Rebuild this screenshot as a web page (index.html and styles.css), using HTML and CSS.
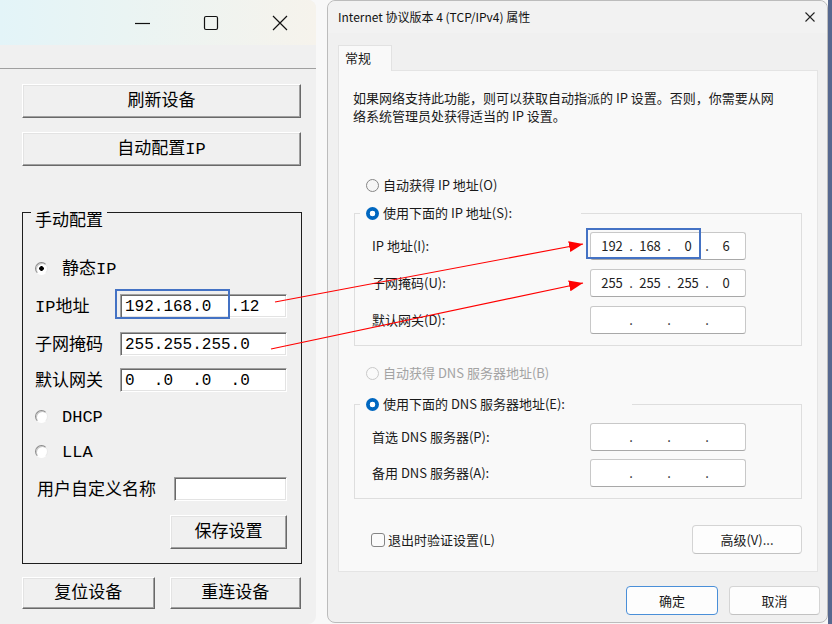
FILE: index.html
```html
<!DOCTYPE html>
<html lang="zh-CN">
<head>
<meta charset="utf-8">
<title>IP 配置</title>
<link rel="stylesheet" href="styles.css">
</head>
<body>
<div class="win-left">
  <div class="lt-title">
    <span class="cap"><svg width="16" height="16" viewBox="0 0 16 16"><path d="M1 8.5h15" stroke="#111" stroke-width="1.2"/></svg></span>
    <span class="cap"><svg width="16" height="16" viewBox="0 0 16 16"><rect x="1.5" y="1.5" width="13" height="13" rx="1.5" fill="none" stroke="#111" stroke-width="1.2"/></svg></span>
    <span class="cap"><svg width="16" height="16" viewBox="0 0 16 16"><path d="M1 1L15 15M15 1L1 15" stroke="#111" stroke-width="1.2"/></svg></span>
  </div>
  <div class="lt-menu"></div>
  <div class="lt-body">
    <button class="cbtn wide">刷新设备</button>
    <button class="cbtn wide second">自动配置IP</button>
    <div class="group">
      <span class="group-title">手动配置</span>
      <div class="lrow radio-first"><span class="cradio checked"></span><span class="rlabel">静态IP</span></div>
      <div class="lrow field gap14"><span class="flabel">IP地址</span><span class="cinput">192.168.0  .12</span></div>
      <div class="lrow field gap14"><span class="flabel">子网掩码</span><span class="cinput">255.255.255.0</span></div>
      <div class="lrow field gap12"><span class="flabel">默认网关</span><span class="cinput">0  .0  .0  .0</span></div>
      <div class="lrow gap12"><span class="cradio"></span><span class="rlabel">DHCP</span></div>
      <div class="lrow gap11"><span class="cradio"></span><span class="rlabel">LLA</span></div>
      <div class="lrow field gap14"><span class="flabel name">用户自定义名称</span><span class="cinput short"></span></div>
      <button class="cbtn save">保存设置</button>
    </div>
    <div class="lbottom">
      <button class="cbtn half">复位设备</button>
      <button class="cbtn half right">重连设备</button>
    </div>
  </div>
</div>

<div class="dlg">
  <div class="dlg-title">
    <span>Internet 协议版本 4 (TCP/IPv4) 属性</span>
    <svg width="10" height="10" viewBox="0 0 10 10"><path d="M0.5 0.5L9.5 9.5M9.5 0.5L0.5 9.5" stroke="#222" stroke-width="1.1"/></svg>
  </div>
  <div class="dlg-body">
    <div class="tabs"><span class="tab">常规</span></div>
    <div class="panel">
      <p class="desc">如果网络支持此功能，则可以获取自动指派的 IP 设置。否则，你需要从网<br>络系统管理员处获得适当的 IP 设置。</p>
      <div class="wrow-radio first"><span class="wradio"></span><span>自动获得 IP 地址(O)</span></div>
      <div class="wgroup ipgroup">
        <div class="legend ip"><span class="wradio on"></span><span>使用下面的 IP 地址(S):</span></div>
        <div class="wrow"><span class="wlabel">IP 地址(I):</span><div class="ipbox"><span class="oct">192</span><span class="dot">.</span><span class="oct">168</span><span class="dot">.</span><span class="oct">0</span><span class="dot">.</span><span class="oct">6</span></div></div>
        <div class="wrow"><span class="wlabel">子网掩码(U):</span><div class="ipbox"><span class="oct">255</span><span class="dot">.</span><span class="oct">255</span><span class="dot">.</span><span class="oct">255</span><span class="dot">.</span><span class="oct">0</span></div></div>
        <div class="wrow"><span class="wlabel">默认网关(D):</span><div class="ipbox"><span class="oct"></span><span class="dot">.</span><span class="oct"></span><span class="dot">.</span><span class="oct"></span><span class="dot">.</span><span class="oct"></span></div></div>
      </div>
      <div class="wrow-radio dns disabled"><span class="wradio dis"></span><span>自动获得 DNS 服务器地址(B)</span></div>
      <div class="wgroup dnsgroup">
        <div class="legend dnsl"><span class="wradio on"></span><span>使用下面的 DNS 服务器地址(E):</span></div>
        <div class="wrow tight"><span class="wlabel">首选 DNS 服务器(P):</span><div class="ipbox"><span class="oct"></span><span class="dot">.</span><span class="oct"></span><span class="dot">.</span><span class="oct"></span><span class="dot">.</span><span class="oct"></span></div></div>
        <div class="wrow tight"><span class="wlabel">备用 DNS 服务器(A):</span><div class="ipbox"><span class="oct"></span><span class="dot">.</span><span class="oct"></span><span class="dot">.</span><span class="oct"></span><span class="dot">.</span><span class="oct"></span></div></div>
      </div>
      <div class="pfoot">
        <label class="chk"><span class="wcheck"></span><span>退出时验证设置(L)</span></label>
        <button class="wbtn adv">高级(V)...</button>
      </div>
    </div>
    <div class="actions">
      <button class="wbtn act primary">确定</button>
      <button class="wbtn act">取消</button>
    </div>
  </div>
</div>

<svg class="annot" width="832" height="624" viewBox="0 0 832 624">
  <defs>
    <marker id="ah" viewBox="0 0 14 11" refX="14" refY="5.5" markerWidth="14" markerHeight="11" markerUnits="userSpaceOnUse" orient="auto">
      <path d="M0 0L14 5.5L0 11z" fill="#ff0000"/>
    </marker>
  </defs>
  <line x1="275" y1="302" x2="583" y2="244" stroke="#ff0000" stroke-width="1.2" marker-end="url(#ah)"/>
  <line x1="271" y1="349" x2="583" y2="283" stroke="#ff0000" stroke-width="1.2" marker-end="url(#ah)"/>
  <rect x="116" y="290" width="113" height="28" fill="none" stroke="#4472c4" stroke-width="2"/>
  <rect x="587" y="229" width="113" height="29" fill="none" stroke="#4472c4" stroke-width="2"/>
</svg>
</body>
</html>
```

FILE: styles.css
```css
* { box-sizing: border-box; }
html, body { margin: 0; padding: 0; }
body {
  width: 832px;
  height: 624px;
  overflow: hidden;
  position: relative;
  display: flex;
  align-items: flex-start;
  background: linear-gradient(to right, #f8f8f8 828px, #56688f 828px);
}

/* ---------- Left classic window ---------- */
.win-left {
  width: 316px;
  height: 624px;
  background: #f0f0f0;
  border-radius: 0 8px 8px 0;
  display: flex;
  flex-direction: column;
  font-family: "Liberation Mono", "Noto Sans CJK SC", monospace;
  font-size: 17px;
  color: #000;
  overflow: hidden;
}
.lt-title {
  height: 45px;
  display: flex;
  justify-content: flex-end;
  padding-right: 2px;
  background: linear-gradient(to right, #e3f4f8 0%, #eaf4f3 40%, #f6f3ec 100%);
}
.cap {
  width: 69px;
  display: flex;
  align-items: center;
  justify-content: center;
}
.lt-menu {
  height: 24px;
  border-bottom: 1px solid #a0a0a0;
}
.lt-body {
  display: flex;
  flex-direction: column;
  padding: 15px 15px 0 22px;
}
.cbtn {
  height: 34px;
  padding: 2px 0 0;
  font: inherit;
  line-height: 20px;
  color: #000;
  background: #f0f0f0;
  border: 1px solid;
  border-color: #ffffff #696969 #696969 #ffffff;
  box-shadow: inset -1px -1px #a0a0a0, inset 1px 1px #e3e3e3;
}
.wide { width: 279px; }
.second { margin-top: 14px; }

.group {
  margin-top: 46px;
  width: 280px;
  border: 1px solid #1e1e1e;
  display: flex;
  flex-direction: column;
  padding: 0 14px 14px 12px;
}
.group-title {
  align-self: flex-start;
  margin: -6px 0 0 -4px;
  padding: 3px 4px 0;
  line-height: 23px;
  height: 26px;
  background: #f0f0f0;
}
.lrow {
  display: flex;
  align-items: center;
  height: 24px;
}
.radio-first { margin-top: 23px; }
.gap14 { margin-top: 14px; }
.gap12 { margin-top: 12px; }
.gap11 { margin-top: 11px; }
.cradio {
  width: 13px;
  height: 13px;
  border-radius: 50%;
  border: 1px solid;
  border-color: #8a8a8a #e8e8e8 #ffffff #8a8a8a;
  background: #fff;
  box-shadow: inset 1px 1px #c8c8c8;
  flex: none;
}
.cradio.checked {
  background: radial-gradient(circle, #000 0 2px, #fff 2.6px);
}
.rlabel { margin-left: 14px; line-height: 20px; padding-top: 3px; }
.flabel { width: 85px; line-height: 20px; padding-top: 3px; flex: none; }
.flabel.name { width: 139px; padding-left: 2px; }
.cinput {
  width: 167px;
  height: 24px;
  background: #fff;
  border: 1px solid;
  border-color: #a0a0a0 #ffffff #ffffff #a0a0a0;
  box-shadow: inset 1px 1px #696969, inset -1px -1px #e3e3e3;
  font-family: "Liberation Mono", monospace;
  font-size: 16px;
  line-height: 22px;
  padding: 1px 0 0 4px;
  white-space: pre;
}
.cinput.short { width: 113px; }
.save {
  align-self: flex-start;
  margin: 14px 0 0 135px;
  width: 117px;
}
.lbottom {
  display: flex;
  margin-top: 13px;
}
.half { width: 133px; height: 32px; }
.half.right { width: 132px; margin-left: 15px; }

/* ---------- Right Windows 11 dialog ---------- */
.dlg {
  width: 501px;
  height: 623px;
  margin-left: 11px;
  background: #f0f0f0;
  border: 1px solid #bcbcbc;
  border-radius: 8px;
  display: flex;
  flex-direction: column;
  font-family: "Noto Sans CJK SC", sans-serif;
  font-size: 13px;
  color: #1a1a1a;
}
.dlg-title {
  height: 32px;
  display: flex;
  align-items: center;
  justify-content: space-between;
  padding: 0 12px 0 10px;
  font-size: 12px;
  line-height: 16px;
  color: #111;
  background: #f2f2f2;
  border-radius: 8px 8px 0 0;
}
.dlg-body {
  display: flex;
  flex-direction: column;
  padding: 12px 9px 0 10px;
}
.tabs { display: flex; }
.tab {
  width: 54px;
  height: 26px;
  line-height: 24px;
  padding-left: 6px;
  background: #f9f9f9;
  border: 1px solid #e2e2e2;
  border-bottom: none;
  margin-bottom: -1px;
  position: relative;
  z-index: 1;
}
.panel {
  height: 502px;
  background: #f9f9f9;
  border: 1px solid #e4e4e4;
  padding-top: 18px;
  display: flex;
  flex-direction: column;
}
.desc {
  margin: 0 0 0 14px;
  line-height: 18px;
  white-space: nowrap;
}
.wrow-radio {
  display: flex;
  align-items: center;
  gap: 4px;
  height: 20px;
  padding-left: 27px;
  line-height: 18px;
}
.wrow-radio.first { margin-top: 50px; }
.wrow-radio.dns { margin-top: 17px; }
.wrow-radio.disabled { color: #a3a3a3; }
.wradio {
  width: 13px;
  height: 13px;
  border-radius: 50%;
  border: 1px solid #868686;
  background: #f6f6f6;
  flex: none;
}
.wradio.on {
  border: none;
  background: radial-gradient(circle, #ffffff 0 2.6px, #0067c0 3.1px);
}
.wradio.dis { border-color: #c9c9c9; background: #fafafa; }
.wgroup {
  width: 448px;
  margin-left: 15px;
  border: 1px solid #dedede;
  display: flex;
  flex-direction: column;
  padding: 0 0 11px 17px;
}
.ipgroup { margin-top: 18px; }
.dnsgroup { margin-top: 21px; }
.legend {
  align-self: flex-start;
  display: flex;
  align-items: center;
  gap: 4px;
  height: 20px;
  margin: -11px 0 0 -12px;
  padding-left: 6px;
  background: #f9f9f9;
  line-height: 18px;
}
.legend.ip { width: 221px; }
.legend.dnsl { width: 272px; }
.wrow {
  display: flex;
  align-items: center;
  margin-top: 9px;
}
.wrow.tight + .wrow.tight { margin-top: 8px; }
.wlabel { width: 218px; line-height: 18px; flex: none; }
.ipbox {
  width: 156px;
  height: 28px;
  background: #fff;
  border: 1px solid #c8c8c8;
  border-bottom-color: #a8a8a8;
  border-radius: 3px;
  display: flex;
  align-items: center;
  padding-left: 5px;
  line-height: 18px;
  color: #222;
}
.oct { width: 32px; text-align: center; }
.dot { width: 6px; text-align: center; }
.pfoot {
  margin-top: 26px;
  height: 29px;
  display: flex;
  align-items: center;
  justify-content: space-between;
  padding: 0 15px 0 32px;
}
.chk {
  display: flex;
  align-items: center;
  gap: 3px;
  line-height: 18px;
}
.wcheck {
  width: 14px;
  height: 14px;
  border: 1px solid #858585;
  border-radius: 3px;
  background: #fbfbfb;
}
.wbtn {
  font: inherit;
  font-size: 13px;
  color: #1a1a1a;
  background: #fdfdfd;
  border: 1px solid #d4d4d4;
  border-bottom-color: #c2c2c2;
  border-radius: 4px;
  height: 29px;
  padding: 0;
  line-height: 18px;
}
.adv { width: 110px; }
.actions {
  display: flex;
  justify-content: flex-end;
  gap: 11px;
  margin-top: 14px;
  margin-right: -2px;
}
.act { width: 91px; }
.act.primary { width: 92px; border: 1px solid #4a8fd8; }

/* ---------- annotations ---------- */
.annot {
  position: absolute;
  left: 0;
  top: 0;
  pointer-events: none;
}
```
